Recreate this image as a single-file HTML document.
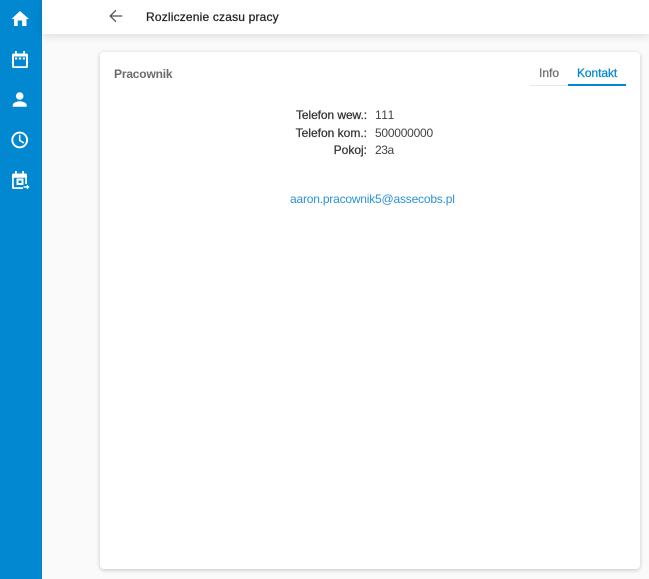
<!DOCTYPE html>
<html><head><meta charset="utf-8"><style>
html,body{margin:0;padding:0;width:649px;height:579px;overflow:hidden;background:#fafafa;font-family:"Liberation Sans",sans-serif;}
.abs{position:absolute;white-space:nowrap;}
#side{position:absolute;left:0;top:0;width:42px;height:579px;background:#0288d1;}
#top{position:absolute;left:42px;top:0;width:607px;height:34px;background:#fff;box-shadow:0 2px 9px rgba(0,0,0,.12);}
#card{position:absolute;left:100px;top:52px;width:540px;height:517px;background:#fff;border-radius:4px;box-shadow:0 1px 4px rgba(0,0,0,.22);}
.l{font-size:12px;font-weight:400;color:#333;text-align:right;right:282px;-webkit-text-stroke:.25px #333;}
.v{font-size:12px;color:#444;left:375px;}
svg{position:absolute;}
</style></head><body>
<div id="side"></div>
<div id="top"></div>
<div id="card"></div>
<svg style="left:0;top:0" width="42" height="200" viewBox="0 0 42 200" fill="#fff">
<path d="M17.700 26v-5.500h4.400V26h4.400v-7h2.500L20 11l-8.500 8H14v7z"/>
<path fill-rule="evenodd" d="M15 51h1.800v2.500h6.400V51H25v2.500h1.500A1.500 1.500 0 0 1 28 55v11.500a1.500 1.500 0 0 1-1.500 1.500h-13a1.500 1.500 0 0 1-1.500-1.500V55a1.500 1.500 0 0 1 1.500-1.500H15zM14 56.500v9.700h12v-9.700z"/>
<rect x="15" y="57.500" width="2.200" height="2"/><rect x="18.900" y="57.500" width="2.200" height="2"/><rect x="22.800" y="57.500" width="2.200" height="2"/>
<circle cx="19.700" cy="96" r="3.800"/>
<path d="M12.700 106.800v-1.800c0-2.400 4.700-3.800 7-3.800s7 1.400 7 3.800v1.800z"/>
<circle cx="19.700" cy="140" r="7.400" fill="none" stroke="#fff" stroke-width="1.900"/>
<path d="M19.700 134.700v5.700l4.200 2.600" fill="none" stroke="#fff" stroke-width="1.500"/>
<path fill-rule="evenodd" d="M15 171h1.800v2.500h5.400V171H24v2.500h1.500A1.500 1.500 0 0 1 27 175v9h-1.800v-6.200H13.800v9.400h9.200v1.800h-9.500a1.500 1.500 0 0 1-1.500-1.500V175a1.500 1.500 0 0 1 1.500-1.500H15z"/>
<path fill-rule="evenodd" d="M16.500 178.500h7v6.500h-7zm2 2v2.500h3v-2.500z"/>
<path d="M23.500 186.300h3.300v-1.800l2.700 2.500-2.700 2.500v-1.800h-3.300z"/>
</svg>
<svg style="left:104px;top:0" width="24" height="32" viewBox="104 0 24 32" fill="none" stroke="#555" stroke-width="1.300"><path d="M122.300 16H110.500M116 10.200L110.200 16l5.800 5.800"/></svg>
<div class="abs" style="left:146px;top:10px;font-size:12px;line-height:15px;color:#222;letter-spacing:.18px;-webkit-text-stroke:.25px #222">Rozliczenie czasu pracy</div>
<div class="abs" style="left:114px;top:67px;font-size:12px;line-height:15px;color:#6c6c6c;font-weight:700;letter-spacing:-.18px">Pracownik</div>
<div class="abs" style="left:539px;top:66px;font-size:12px;line-height:15px;color:#6c6c6c;-webkit-text-stroke:.25px #6c6c6c">Info</div>
<div class="abs" style="left:577px;top:66px;font-size:12px;line-height:15px;color:#0288d1;letter-spacing:-.08px;-webkit-text-stroke:.25px #0288d1">Kontakt</div>
<div class="abs" style="left:530px;top:85px;width:38px;height:1px;background:#e8e8e8"></div>
<div class="abs" style="left:568px;top:84px;width:58px;height:2px;background:#0288d1"></div>
<div class="abs l" style="top:108px;line-height:15px;letter-spacing:-.08px">Telefon wew.:</div>
<div class="abs l" style="top:126px;line-height:15px">Telefon kom.:</div>
<div class="abs l" style="top:143px;line-height:15px">Pokoj:</div>
<div class="abs v" style="top:108px;line-height:15px;letter-spacing:.5px">111</div>
<div class="abs v" style="top:126px;line-height:15px;letter-spacing:-.24px">500000000</div>
<div class="abs v" style="top:143px;line-height:15px;letter-spacing:-.4px">23a</div>
<div class="abs" style="left:290px;top:192px;font-size:12px;line-height:15px;color:#2a93d5;letter-spacing:-.2px">aaron.pracownik5@assecobs.pl</div>
</body></html>
